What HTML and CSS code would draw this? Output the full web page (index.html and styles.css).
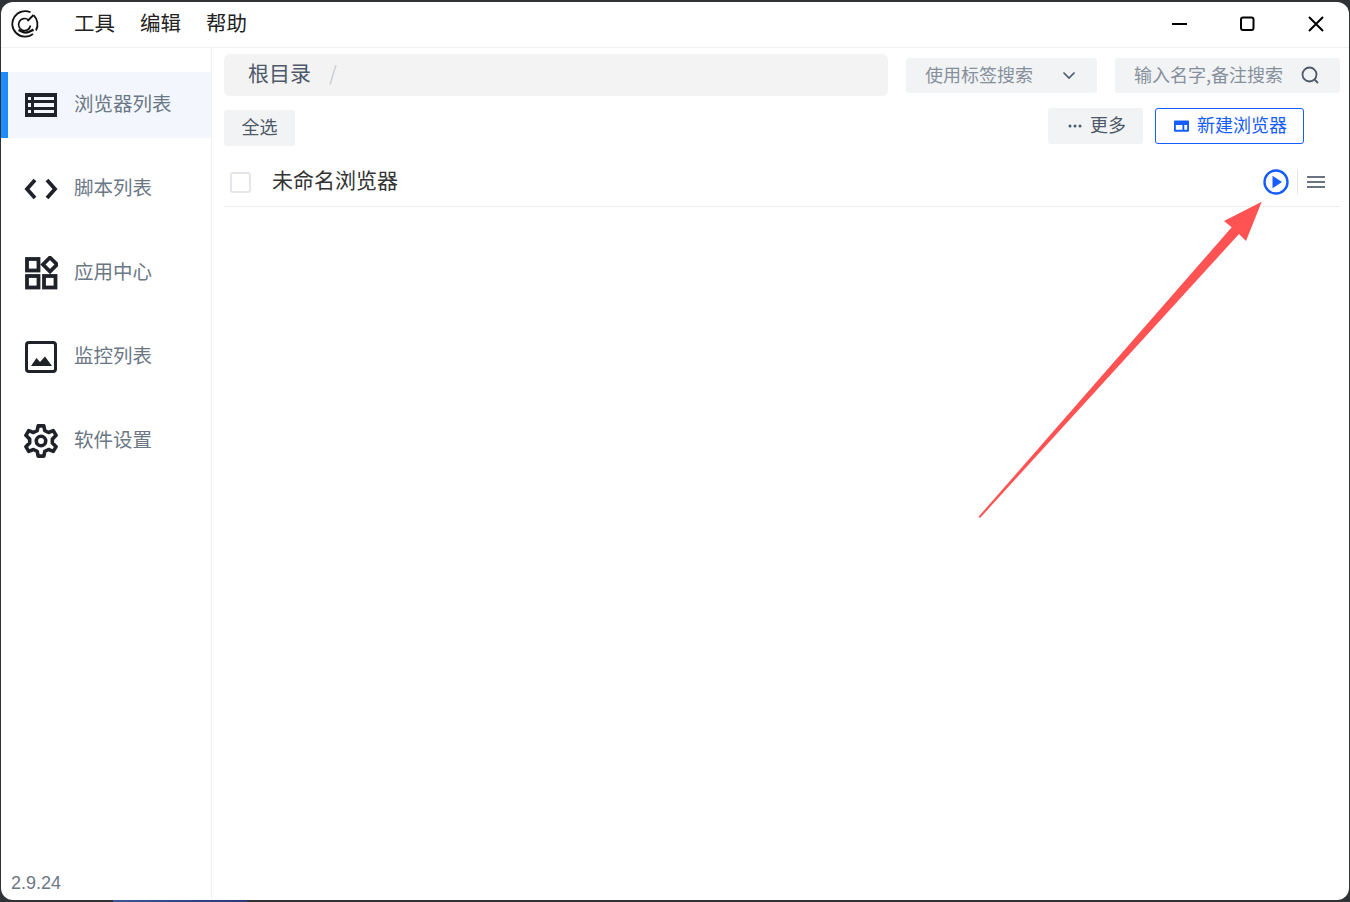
FILE: index.html
```html
<!DOCTYPE html>
<html lang="zh-CN">
<head>
  <meta charset="UTF-8" />
  <title>浏览器列表</title>
  <link rel="stylesheet" href="styles.css">
</head>
<body>
  <div class="window">
    <header class="titlebar">
      <svg class="logo" viewBox="0 0 28 28" fill="none" stroke="#111" stroke-width="1.800">
        <path d="M19.500 2.300A12.800 12.800 0 1 0 22 24"/>
        <path d="M22.500 5.200A12.800 12.800 0 0 1 25 20.500"/>
        <path d="M22.500 5L16.500 11"/>
        <path d="M17.500 10A6 6 0 1 0 19.500 15.500" stroke-width="1.600"/>
        <path d="M7.500 20c2 .4 3.500 2.600 7 2.600s5.500-1.800 8-3" stroke-width="2.400"/>
      </svg>
      <nav class="menu">
        <span>工具</span>
        <span>编辑</span>
        <span>帮助</span>
      </nav>
      <div class="win-btns">
        <svg viewBox="0 0 16 16" fill="none" stroke="#000" stroke-width="2"><path d="M0 8h15"/></svg>
        <svg viewBox="0 0 16 16" fill="none" stroke="#000" stroke-width="2"><rect x="1" y="1.500" width="12.500" height="12.500" rx="2"/></svg>
        <svg viewBox="0 0 16 16" fill="none" stroke="#000" stroke-width="2"><path d="M1 1l14 14M15 1L1 15"/></svg>
      </div>
    </header>

    <div class="body-wrap">
      <aside class="sidebar">
        <a class="nav-item active">
          <svg class="nav-icon" viewBox="0 0 34 26"><path fill="#1f2329" fill-rule="evenodd" d="M1 1h32v24H1zM4 5v3h3V5zM10 5v3h20V5zM4 11v4h3v-4zM10 11v4h20v-4zM4 18v3h3v-3zM10 18v3h20v-3z"/></svg>
          <span>浏览器列表</span>
        </a>
        <a class="nav-item">
          <svg class="nav-icon" viewBox="0 0 34 22" fill="none" stroke="#1f2329" stroke-width="3.800"><path d="M11 2L3 11l8 9M23 2l8 9-8 9"/></svg>
          <span>脚本列表</span>
        </a>
        <a class="nav-item">
          <svg class="nav-icon tall" viewBox="0 0 34 34" fill="none" stroke="#1f2329" stroke-width="3.800"><rect x="3" y="3" width="11.500" height="11.500"/><rect x="3" y="20" width="11.500" height="11.500"/><rect x="20" y="20" width="11.500" height="11.500"/><path d="M26 1.500l7 7-7 7-7-7z"/></svg>
          <span>应用中心</span>
        </a>
        <a class="nav-item">
          <svg class="nav-icon tall" viewBox="0 0 34 34"><rect x="2.500" y="2.500" width="29" height="29" rx="2.500" fill="none" stroke="#1f2329" stroke-width="3"/><path fill="#1f2329" d="M7 26l5.500-8 3.500 4 5-5.500 7 9.500z"/></svg>
          <span>监控列表</span>
        </a>
        <a class="nav-item">
          <svg class="nav-icon tall" viewBox="0 0 34 36" fill="none" stroke="#1f2329" stroke-width="3.800"><path d="M14 2h6l1 5 4 2 5-2 3 5-4 4v4l4 4-3 5-5-2-4 2-1 5h-6l-1-5-4-2-5 2-3-5 4-4v-4l-4-4 3-5 5 2 4-2z" stroke-linejoin="round"/><circle cx="17" cy="18" r="5"/></svg>
          <span>软件设置</span>
        </a>
        <div class="version">2.9.24</div>
      </aside>

      <main class="content">
        <div class="toolbar">
          <div class="crumb"><span class="crumb-name">根目录</span><span class="crumb-sep">/</span></div>
          <div class="filter tags">
            <span>使用标签搜索</span>
            <svg viewBox="0 0 14 14" fill="none" stroke="#4e5969" stroke-width="1.600"><path d="M1.500 4.500L7 10l5.500-5.500"/></svg>
          </div>
          <div class="filter search">
            <span>输入名字,备注搜索</span>
            <svg viewBox="0 0 18 18" fill="none" stroke="#4e5969" stroke-width="1.800"><circle cx="8.500" cy="8.500" r="7"/><path d="M13.500 13.500l3.500 3.500"/></svg>
          </div>
        </div>

        <div class="actions">
          <button class="btn select-all">全选</button>
          <div class="actions-right">
            <button class="btn more"><svg viewBox="0 0 14 4" fill="#4e5969"><circle cx="2" cy="2" r="1.500"/><circle cx="7" cy="2" r="1.500"/><circle cx="12" cy="2" r="1.500"/></svg>更多</button>
            <button class="btn primary">
              <svg viewBox="0 0 16 12"><path fill="#165dff" fill-rule="evenodd" d="M0 1a1 1 0 0 1 1-1h14a1 1 0 0 1 1 1v10a1 1 0 0 1-1 1H1a1 1 0 0 1-1-1zM2 5v5h7V5zM11 5v5h3V5z"/></svg>新建浏览器
            </button>
          </div>
        </div>

        <div class="row">
          <span class="check"></span>
          <span class="row-name">未命名浏览器</span>
          <svg class="play" viewBox="0 0 26 26"><circle cx="13" cy="13" r="11.500" fill="none" stroke="#165dff" stroke-width="2.400"/><path fill="#165dff" d="M9.500 6.800L19 13l-9.500 6.200z"/></svg>
          <span class="row-sep"></span>
          <svg class="burger" viewBox="0 0 20 14" fill="none" stroke="#6b7280" stroke-width="2"><path d="M1 2h18M1 7h18M1 12h18"/></svg>
        </div>
      </main>
    </div>
  </div>

  <div class="taskbar-peek"></div>

  <!-- annotation drawn on top of the screenshot -->
  <svg class="arrow" viewBox="0 0 1350 902">
    <path fill="#ff5353" d="M978.500 516.800L1231.700 227.300 1224 221 1261.700 201.700 1246 241 1239 234 980 518z"/>
  </svg>
</body>
</html>
```

FILE: styles.css
```css
* {
  box-sizing: border-box;
}

body {
  margin: 0;
  width: 1350px;
  height: 902px;
  padding: 2px 1px 2px 1px;
  overflow: hidden;
  position: relative;
  background-color: #2f3336;
  font-family: "Noto Sans CJK SC", "Liberation Sans", sans-serif;
}

.window {
  height: 100%;
  display: flex;
  flex-direction: column;
  background: #fff;
  border-radius: 12px;
  overflow: hidden;
}

.titlebar {
  height: 46px;
  flex: none;
  display: flex;
  align-items: center;
  padding: 0 0 2px 10px;
  border-bottom: 1px solid #f0f1f3;
}

.logo {
  width: 28px;
  height: 28px;
}

.menu {
  display: flex;
  gap: 25px;
  margin-left: 35px;
  font-size: 20.500px;
  color: #222;
}

.menu span {
  margin-bottom: 4px;
}

.win-btns {
  margin-left: auto;
  display: flex;
  align-items: center;
  gap: 52px;
  padding-right: 25px;
}

.win-btns svg {
  width: 16px;
  height: 16px;
}

.body-wrap {
  flex: 1;
  display: flex;
  min-height: 0;
}

.sidebar {
  width: 211px;
  flex: none;
  display: flex;
  flex-direction: column;
  gap: 18px;
  padding-top: 24px;
  border-right: 1px solid #f0f1f3;
}

.nav-item {
  height: 66px;
  display: flex;
  align-items: center;
  padding-left: 7px;
  border-left: 7px solid transparent;
  color: #6b7785;
  font-size: 19.500px;
}

.nav-item span {
  margin-bottom: 6px;
}

.nav-item.active {
  background: #f3f7fd;
  border-left-color: #1e8cff;
}

.nav-icon {
  width: 34px;
  height: 26px;
  margin: 0 16px 0 9px;
  flex: none;
}

.nav-icon.tall {
  height: 34px;
}

.version {
  margin-top: auto;
  padding: 0 0 6px 10px;
  font-family: "Liberation Sans", sans-serif;
  font-size: 18px;
  color: #6b7785;
}

.content {
  flex: 1;
  min-width: 0;
  display: flex;
  flex-direction: column;
  padding: 6px 9px 0 12px;
}

.toolbar {
  display: flex;
  align-items: center;
  height: 42px;
}

.crumb {
  width: 664px;
  height: 42px;
  display: flex;
  align-items: center;
  padding: 0 0 6px 24px;
  background: #f3f3f3;
  border-radius: 6px;
}

.crumb-name {
  font-size: 21px;
  color: #4e5969;
}

.crumb-sep {
  margin-left: 18px;
  font-size: 20px;
  color: #c9cdd4;
}

.filter {
  height: 35px;
  display: flex;
  align-items: center;
  justify-content: space-between;
  background: #f2f3f5;
  border-radius: 3px;
  font-size: 18px;
  color: #86909c;
}

.filter span {
  margin-bottom: 2px;
}

.filter svg {
  flex: none;
}

.tags {
  width: 191px;
  margin-left: 18px;
  padding: 0 21px 0 19px;
}

.tags svg {
  width: 14px;
  height: 14px;
}

.search {
  width: 225px;
  margin-left: 18px;
  padding: 0 21px 0 19px;
}

.search svg {
  width: 18px;
  height: 18px;
}

.actions {
  display: flex;
  align-items: flex-start;
  justify-content: space-between;
  height: 50px;
  padding: 14px 36px 0 0;
}

.actions-right {
  display: flex;
  gap: 12px;
  margin-top: -2px;
}

.btn {
  height: 36px;
  padding: 0 18px 5px;
  display: flex;
  align-items: center;
  border: 0;
  border-radius: 3px;
  background: #f2f3f5;
  font-family: inherit;
  font-size: 18px;
  color: #4e5969;
  white-space: nowrap;
}

.select-all {
  width: 71px;
  padding-left: 17px;
  padding-right: 17px;
  justify-content: center;
}

.more {
  padding-left: 20px;
  padding-right: 17px;
}

.more svg {
  width: 14px;
  height: 4px;
  margin: 5px 8px 0 0;
}

.primary {
  padding: 0 16px 5px 18px;
  background: #fff;
  border: 1px solid #165dff;
  color: #165dff;
}

.primary svg {
  width: 15px;
  height: 12px;
  margin: 5px 8px 0 0;
}

.row {
  height: 61px;
  display: flex;
  align-items: center;
  padding: 12px 14px 0 6px;
  border-bottom: 1px solid #eceef0;
}

.check {
  width: 21px;
  height: 21px;
  border: 2.500px solid #e5e6eb;
  border-radius: 3px;
}

.row-name {
  margin: 0 0 6px 21px;
  font-size: 21px;
  color: #333;
}

.play {
  width: 26px;
  height: 26px;
  margin-left: auto;
}

.row-sep {
  width: 1px;
  height: 24px;
  margin: 0 8px;
  background: #e5e6eb;
}

.burger {
  width: 20px;
  height: 14px;
}

.taskbar-peek {
  position: absolute;
  left: 113px;
  bottom: 0;
  width: 134px;
  height: 2px;
  background: linear-gradient(90deg, #3a5a94 0%, #2c4a8e 40%, #2b3a78 100%);
}

.arrow {
  position: absolute;
  left: 0;
  top: 0;
  width: 1350px;
  height: 902px;
  pointer-events: none;
}
```
